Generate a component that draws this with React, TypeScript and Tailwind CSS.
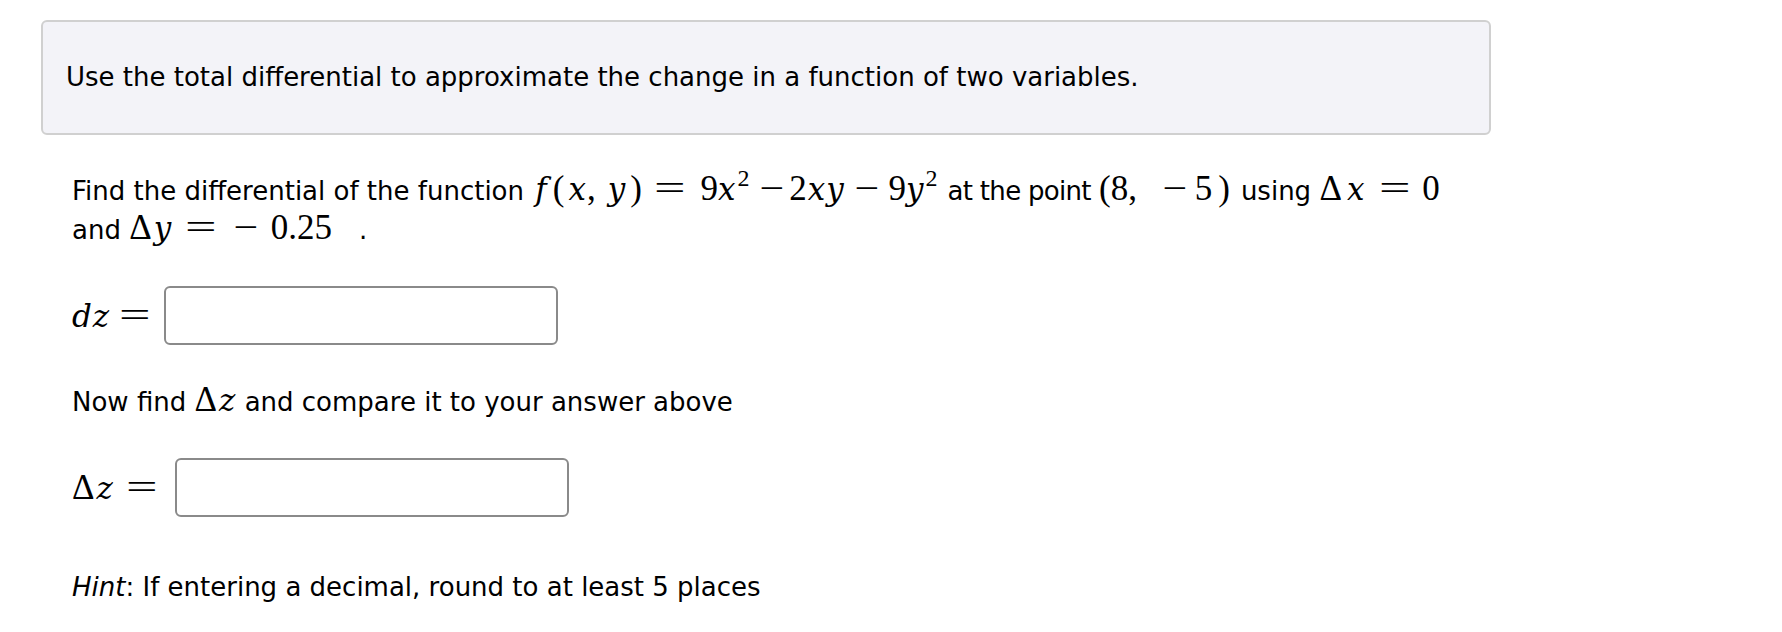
import React from "react";

const sans = "font-['DejaVu_Sans','Noto_Sans',sans-serif]";
const mf = "font-['Liberation_Serif','DejaVu_Serif',serif] text-[35px] leading-none";

function G({ children, className = "" }: { children: React.ReactNode; className?: string }) {
  return <span className={`${mf} whitespace-nowrap ${className}`}>{children}</span>;
}
function I({ children, className = "" }: { children: React.ReactNode; className?: string }) {
  return (
    <span className={`font-['DejaVu_Serif',serif] italic text-[31px] tracking-[1px] ${className}`}>
      {children}
    </span>
  );
}
function Eq({ className = "" }: { className?: string }) {
  return <span className={`${mf} inline-block scale-x-[1.6] ${className}`}>=</span>;
}
function Mi({ className = "" }: { className?: string }) {
  return <span className={`${mf} inline-block scale-x-[1.25] ${className}`}>−</span>;
}
function D({ className = "mr-[2px]" }: { className?: string }) {
  return <span className={className}>Δ</span>;
}
function Sup({ children }: { children: React.ReactNode }) {
  return <span className="relative -top-[14px] text-[24px] leading-none ml-[1px]">{children}</span>;
}

export default function App() {
  return (
    <div className={`w-[1782px] h-[632px] bg-white text-black ${sans} text-[26px]`}>
      <div className="pt-[20px] pl-[41px]">
        <div className="w-[1450px] h-[115px] border-2 border-[#d0d0d0] rounded-[6px] bg-[#f3f3f8] flex items-center pl-[23px]">
          <span>Use the total differential to approximate the change in a function of two variables.</span>
        </div>
      </div>

      <div className="pl-[72px] pt-[36px]">
        <div className="leading-[38px] whitespace-nowrap">
          Find the differential of the function{" "}
          <G className="ml-[3px]">
            <I className="mr-[5px]">f</I>
            <span className="mr-[4px]">(</span>
            <I>x</I>,<span className="ml-[12px]" />
            <I>y</I>
            <span className="ml-[4px]">)</span>
          </G>
          <Eq className="ml-[18px] mr-[21px]" />
          <G>
            9<I>x</I>
            <Sup>2</Sup>
          </G>
          <Mi className="ml-[12px] mr-[8px]" />
          <G>
            <span className="mr-[1px]">2</span>
            <I>xy</I>
          </G>
          <Mi className="ml-[12px] mr-[12px]" />
          <G>
            9<I>y</I>
            <Sup>2</Sup>
          </G>
          <span className="ml-[10px] tracking-[-0.7px]">at the point</span>{" "}
          <G>(8,</G>
          <Mi className="ml-[28px] mr-[10px]" />
          <G>
            5<span className="ml-[6px]">)</span>
          </G>
          <span className="ml-[11px]">using</span>{" "}
          <G>
            <D className="mr-[5px]" />
            <I>x</I>
          </G>
          <Eq className="ml-[20px] mr-[17px]" />
          <G>0</G>
          <br />
          and{" "}
          <G>
            <D />
            <I>y</I>
          </G>
          <Eq className="ml-[19px] mr-[25px]" />
          <Mi className="mr-[15px]" />
          <G className="text-[33px]">0.25</G>
          <span className="ml-[27px]">.</span>
        </div>

        <div className="flex items-center mt-[37px] h-[59px]">
          <G>
            <I>dz</I>
          </G>
          <Eq className="ml-[15px]" />
          <div className="ml-[19px] w-[394px] h-[59px] border-2 border-[#8a8a8a] rounded-[6px] bg-white" />
        </div>

        <div className="mt-[37px] leading-[38px]">
          Now find{" "}
          <G>
            <D />
            <I>z</I>
          </G>{" "}
          and compare it to your answer above
        </div>

        <div className="flex items-center mt-[37px] h-[59px]">
          <G>
            <D />
            <I>z</I>
          </G>
          <Eq className="ml-[18px]" />
          <div className="ml-[23px] w-[394px] h-[59px] border-2 border-[#8a8a8a] rounded-[6px] bg-white" />
        </div>

        <div className="mt-[51px] leading-[38px]">
          <span className="italic">Hint</span>: If entering a decimal, round to at least 5 places
        </div>
      </div>
    </div>
  );
}
